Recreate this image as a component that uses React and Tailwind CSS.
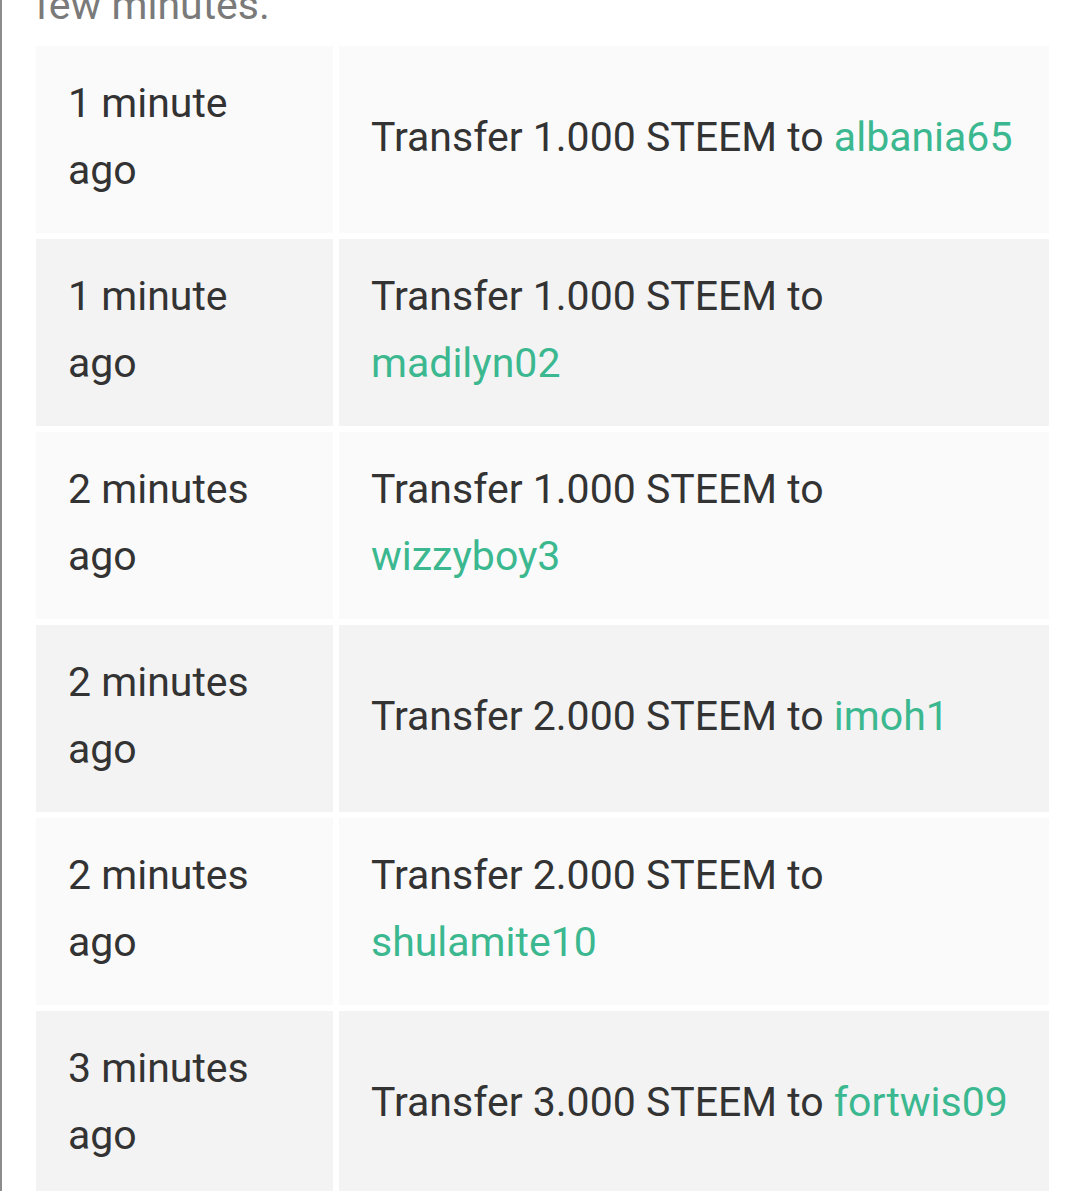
import React from 'react';

const rows = [
  { time: '1 minute ago', amount: '1.000', to: 'albania65' },
  { time: '1 minute ago', amount: '1.000', to: 'madilyn02' },
  { time: '2 minutes ago', amount: '1.000', to: 'wizzyboy3' },
  { time: '2 minutes ago', amount: '2.000', to: 'imoh1' },
  { time: '2 minutes ago', amount: '2.000', to: 'shulamite10' },
  { time: '3 minutes ago', amount: '3.000', to: 'fortwis09' },
];

const App = () => {
  return (
    <div className="h-[1191px] bg-white overflow-hidden" style={{ fontFamily: 'Roboto, "Noto Sans", sans-serif' }}>
      <div className="flex flex-col border-l-2 border-[#8c8c8c] pl-[28px] h-[1300px]">
        {/* tail of the paragraph above, cut by the top edge */}
        <p className="text-[41px] leading-[67px] text-[#7a7a7a] mt-[-28px] pl-[5px]">few minutes.</p>

        <table className="table-fixed w-[1025px] border-separate border-spacing-[6px] text-[41px] leading-[67px] text-[#333] mt-[1px]">
          <tbody>
            {rows.map((row, i) => {
              const bg = i % 2 === 0 ? 'bg-[#fafafa]' : 'bg-[#f3f3f3]';
              return (
                <tr key={i}>
                  <td className={`${bg} w-[297px] pl-[32px] pr-[40px] pt-[24px] pb-[29px] align-middle`}>{row.time}</td>
                  <td className={`${bg} w-[710px] pl-[32px] pr-[32px] pt-[24px] pb-[29px] align-middle`}>
                    Transfer {row.amount} STEEM to <span className="text-[#3bb88f]">{row.to}</span>
                  </td>
                </tr>
              );
            })}
          </tbody>
        </table>
      </div>
    </div>
  );
};

export default App;
